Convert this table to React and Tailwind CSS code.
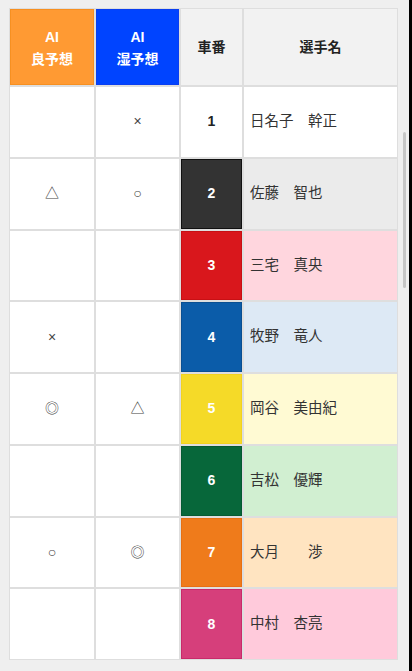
import React from "react";

const rows = [
  { no: 1, name: "日名子　幹正", good: "", wet: "×", car: "bg-white text-[#222] border-white", nameBg: "bg-white" },
  { no: 2, name: "佐藤　智也", good: "△", wet: "○", car: "bg-[#333333] text-white border-[#111111]", nameBg: "bg-[#ebebeb]" },
  { no: 3, name: "三宅　真央", good: "", wet: "", car: "bg-[#d9171c] text-white border-[#c81014]", nameBg: "bg-[#ffd6de]" },
  { no: 4, name: "牧野　竜人", good: "×", wet: "", car: "bg-[#0b5ca9] text-white border-[#0a4f92]", nameBg: "bg-[#dde9f5]" },
  { no: 5, name: "岡谷　美由紀", good: "◎", wet: "△", car: "bg-[#f5da28] text-white border-[#f2d21e]", nameBg: "bg-[#fffad3]" },
  { no: 6, name: "吉松　優輝", good: "", wet: "", car: "bg-[#07673a] text-white border-[#055a32]", nameBg: "bg-[#d1efd1]" },
  { no: 7, name: "大月　　渉", good: "○", wet: "◎", car: "bg-[#ef7b1b] text-white border-[#e77013]", nameBg: "bg-[#ffe4c1]" },
  { no: 8, name: "中村　杏亮", good: "", wet: "", car: "bg-[#d63f7b] text-white border-[#c92a6a]", nameBg: "bg-[#ffcadb]" },
];

const font = "font-['Liberation_Sans','Noto_Sans_CJK_JP',sans-serif]";

export default function App() {
  return (
    <div className={`relative flex h-[671px] w-[412px] overflow-hidden bg-[#efefef] ${font}`}>
      <div className="flex-1 pl-[9px] pt-[8px]">
        <div className="grid w-[389px] grid-cols-[84px_83px_61px_153px] gap-[2px] border border-[#dedede] bg-[#dedede]">
          {/* header */}
          <div className="flex h-[76px] flex-col items-center justify-center border border-[#f79021] bg-[#ff9a33] pt-[2px] text-[14px] font-bold leading-[22px] text-white">
            <span>AI</span>
            <span>良予想</span>
          </div>
          <div className="flex h-[76px] flex-col items-center justify-center border border-[#0a3ef0] bg-[#0044ff] pt-[2px] text-[14px] font-bold leading-[22px] text-white">
            <span>AI</span>
            <span>湿予想</span>
          </div>
          <div className="flex h-[76px] items-center justify-center bg-[#f2f2f2] text-[14px] font-bold text-[#222]">
            車番
          </div>
          <div className="flex h-[76px] items-center justify-center bg-[#f2f2f2] text-[14px] font-bold text-[#222]">
            選手名
          </div>

          {rows.map((r) => (
            <React.Fragment key={r.no}>
              <div className="flex h-[69.75px] items-center justify-center bg-white text-[14px] text-[#444]">
                {r.good}
              </div>
              <div className="flex h-[69.75px] items-center justify-center bg-white text-[14px] text-[#444]">
                {r.wet}
              </div>
              <div className={`flex h-[69.75px] items-center justify-center border text-[14px] font-bold ${r.car}`}>
                {r.no}
              </div>
              <div className={`flex h-[69.75px] items-center whitespace-pre pl-[6px] text-[14.5px] text-[#333] ${r.nameBg}`}>
                {r.name}
              </div>
            </React.Fragment>
          ))}
        </div>
      </div>
      <div className="w-[3px] bg-black" />
      {/* overlay scrollbar thumb */}
      <div className="absolute right-[6px] top-[132px] h-[156px] w-[3px] rounded-full bg-[#c6c6c6]" />
    </div>
  );
}
